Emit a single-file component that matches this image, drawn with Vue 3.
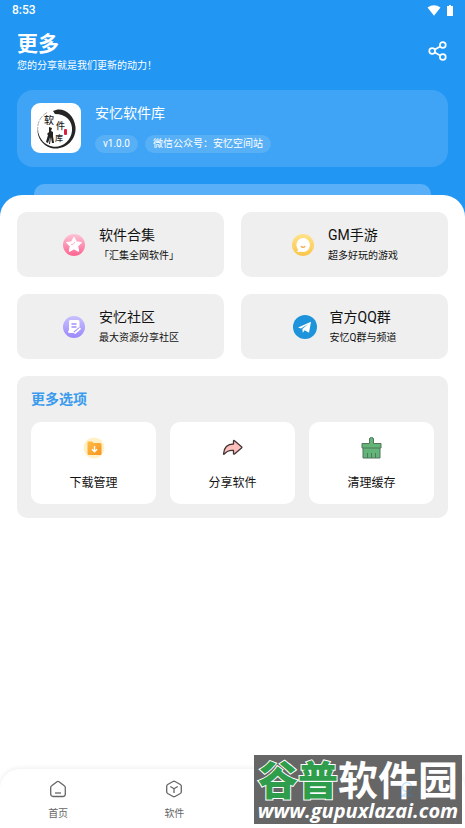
<template>
  <div class="page">
    <header class="hero">
      <div class="status-bar">
        <span>8:53</span>
        <div class="status-icons">
          <svg width="14" height="11" viewBox="0 0 14 11"><path d="M0.5 2.5 Q7 -2 13.5 2.5 L7 10.8 Z" fill="#fff" /></svg>
          <svg width="6" height="11" viewBox="0 0 6 11"><path d="M2 0h2v1h2v10H0V1h2z" fill="#fff" /></svg>
        </div>
      </div>

      <div class="title-row">
        <div>
          <h1>更多</h1>
          <p>您的分享就是我们更新的动力！</p>
        </div>
        <button class="share" aria-label="分享">
          <svg width="20" height="20" viewBox="0 0 20 20" fill="none" stroke="#fff" stroke-width="1.7">
            <circle cx="4.2" cy="10" r="2.9" />
            <circle cx="14.8" cy="4" r="2.9" />
            <circle cx="14.8" cy="16" r="2.9" />
            <path d="M6.8 8.6 12.2 5.5M6.8 11.4l5.4 3.1" />
          </svg>
        </button>
      </div>

      <section class="app-card">
        <svg class="app-logo" width="50" height="50" viewBox="0 0 50 50">
          <rect width="50" height="50" rx="9" fill="#fff" />
          <path d="M22 8C31 3 43 10 44.5 24 45.5 38 33 48 20 45 11 42 6 34 6.500 26c1.500 10 7 16 15 17.500C31 45 40 38 41 28 42 18 35 11 24 11z" fill="#252525" />
          <path d="M7 29C5.500 21 9 13 17 9" fill="none" stroke="#aaa" stroke-width="1" stroke-dasharray="5 1" />
          <text x="13" y="21" font-size="10" class="ink">软</text>
          <text x="25" y="26" font-size="9" class="ink">件</text>
          <text x="24" y="38" font-size="8" class="ink">库</text>
          <path d="M18 24l3 1-1 3 2 1v4l1 7h-2l-1-6-1 7h-1l1-7-2 6-2-1 2-7-1-1 2-2z" fill="#222" />
          <rect x="33" y="26" width="3" height="6" rx="1" fill="#d9203c" />
        </svg>
        <div>
          <h2>安忆软件库</h2>
          <div class="chips">
            <span>v1.0.0</span>
            <span>微信公众号：安忆空间站</span>
          </div>
        </div>
      </section>
      <div class="peek"></div>
    </header>

    <main class="sheet">
      <div class="links">
        <button v-for="item in links" :key="item.icon" class="link-card">
          <svg v-if="item.icon === 'star'" width="24" height="24" viewBox="0 0 24 24">
            <defs>
              <linearGradient id="pink" x2="0" y2="1"><stop stop-color="#ffc3d7" /><stop offset="1" stop-color="#fb6390" /></linearGradient>
            </defs>
            <circle cx="12" cy="12" r="11" fill="url(#pink)" />
            <path d="m12 4.500 2.200 4.400 5 .7-3.600 3.500.9 5-4.500-2.400-4.500 2.400.9-5-3.600-3.500 5-.7z" fill="#fff" stroke="#fff" stroke-width="1.300" stroke-linejoin="round" />
            <path d="M9 11.500q2.500.5 4-2.500" fill="none" stroke="#ffb2ca" />
          </svg>
          <svg v-else-if="item.icon === 'chat'" width="24" height="24" viewBox="0 0 24 24">
            <defs>
              <linearGradient id="gold" x2="0" y2="1"><stop stop-color="#ffe28a" /><stop offset="1" stop-color="#fbc54b" /></linearGradient>
            </defs>
            <circle cx="12" cy="12" r="11" fill="url(#gold)" />
            <path d="M12 5a7 7 0 1 1-2 13.700l-4 .3 1.300-2.300A7 7 0 0 1 12 5z" fill="#fff" />
            <path d="M10.200 13.500q1.800 1.800 3.600 0" fill="none" stroke="#f5a348" stroke-width="1.200" stroke-linecap="round" />
          </svg>
          <svg v-else-if="item.icon === 'note'" width="24" height="24" viewBox="0 0 24 24">
            <defs>
              <linearGradient id="violet" x2="0" y2="1"><stop stop-color="#c9c1ff" /><stop offset="1" stop-color="#9a89fa" /></linearGradient>
            </defs>
            <circle cx="12" cy="12" r="11" fill="url(#violet)" />
            <path d="M8.500 5h7.500q1.500 0 1.500 1.500v6L12 18H7.500Q6 18 6 16.500 7 16 7 14V6.500Q7 5 8.500 5z" fill="#fff" />
            <path d="M9.500 9h5M9.500 12h5" stroke="#9f90fb" stroke-width="1.300" />
            <path d="m12.500 18 5.500-4.500" stroke="#9f90fb" stroke-width="3.500" />
            <path d="m13 18 5-4.200" stroke="#fff" stroke-width="1.800" stroke-linecap="round" />
          </svg>
          <svg v-else width="24" height="24" viewBox="0 0 24 24">
            <circle cx="12" cy="12" r="12" fill="#1c93da" />
            <path d="m5 12.500 13-5.700-2 11-4.300-2.500-1.900 2.400-.5-3.800L15 9.200l-7 4.300z" fill="#fff" />
          </svg>
          <span class="link-text">
            <strong>{{ item.title }}</strong>
            <small>{{ item.note }}</small>
          </span>
        </button>
      </div>

      <section class="options">
        <h3>更多选项</h3>
        <div class="tiles">
          <button class="tile">
            <svg width="24" height="24" viewBox="0 0 24 24">
              <defs>
                <linearGradient id="folder" x2="1" y2="1"><stop stop-color="#ffbd48" /><stop offset="1" stop-color="#f7941d" /></linearGradient>
              </defs>
              <circle cx="12" cy="12" r="10.500" fill="#fff0c8" />
              <path d="M6 5.500h4l1.500 1.500H18q1.500 0 1.500 1.500v9Q19.500 19 18 19H7q-1.500 0-1.500-1.500V6z" fill="url(#folder)" />
              <path d="M12.500 10v5.500M10 13.300l2.500 2.500 2.500-2.500" fill="none" stroke="#fff" stroke-width="1.400" />
            </svg>
            <span>下载管理</span>
          </button>
          <button class="tile">
            <svg width="24" height="24" viewBox="0 0 24 24">
              <path d="M2.500 18C3 11.500 7 8 12.500 8V5q0-1 1-.3l7 6q.8.700 0 1.400l-7 5.900q-1 .5-1-.5v-3C8 14 5.500 15.500 3.300 18q-.6.500-.8 0z" fill="#ffbfba" stroke="#423536" stroke-width="1.300" stroke-linejoin="round" />
            </svg>
            <span>分享软件</span>
          </button>
          <button class="tile">
            <svg width="24" height="24" viewBox="0 0 24 24">
              <path d="M9.500 7.500V3q0-1.500 2-1.500t2 1.500v4.500H21V12h-1v10H3V12H2V7.500z" fill="#61b578" stroke="#55735d" stroke-linejoin="round" />
              <path d="M3 12h17M7.500 17v5M11.500 17v5M15.500 17v5" fill="none" stroke="#55735d" />
            </svg>
            <span>清理缓存</span>
          </button>
        </div>
      </section>
    </main>

    <nav class="tab-bar">
      <button>
        <svg width="18" height="18" viewBox="0 0 18 18" fill="none" stroke="#666" stroke-width="1.300" stroke-linejoin="round">
          <path d="M8 1.800q1-.7 2 0l5.300 4q1 .7 1 2V14q0 2.500-2.500 2.500H4.200Q1.700 16.500 1.700 14V7.800q0-1.300 1-2z" />
          <path d="M6 13h6" />
        </svg>
        <span>首页</span>
      </button>
      <button>
        <svg width="18" height="18" viewBox="0 0 18 18" fill="none" stroke="#666" stroke-width="1.300" stroke-linejoin="round">
          <path d="M8 1.500q1-.5 2 0l5.300 3q1 .6 1 1.800v5.400q0 1.200-1 1.800l-5.300 3q-1 .5-2 0l-5.300-3q-1-.6-1-1.800V6.300q0-1.200 1-1.800z" />
          <path d="M5.300 6.500 9 8.800l3.700-2.300M9 8.800V13" />
        </svg>
        <span>软件</span>
      </button>
    </nav>

    <div class="site-mark">
      <div class="site-name"><b>谷普</b>软件园</div>
      <div class="site-url">www.gupuxlazai.com</div>
      <svg class="mark-tint" width="18" height="18" viewBox="0 0 18 18" fill="none" stroke="#2196f3" stroke-width="1.300">
        <circle cx="9" cy="6" r="4.500" />
        <path d="M4 15q5-5 10 0z" />
      </svg>
    </div>
  </div>
</template>

<script setup>
const links = [
  { icon: 'star', title: '软件合集', note: '「汇集全网软件」' },
  { icon: 'chat', title: 'GM手游', note: '超多好玩的游戏' },
  { icon: 'note', title: '安忆社区', note: '最大资源分享社区' },
  { icon: 'plane', title: '官方QQ群', note: '安忆Q群与频道' }
];
</script>

<style>
body {
  margin: 0;
}
</style>

<style scoped>
.page {
  position: relative;
  display: flex;
  flex-direction: column;
  min-height: 100vh;
  background: #fff;
  font-family: Roboto, "Noto Sans CJK SC", sans-serif;
  color: #111;
}

h1,
h2,
h3,
p {
  margin: 0;
}

button {
  border: 0;
  padding: 0;
  background: none;
  font: inherit;
  color: inherit;
}

svg {
  display: block;
  flex-shrink: 0;
}

.hero {
  padding: 0 17px;
  background: #2196f3;
  color: #fff;
}

.status-bar {
  display: flex;
  align-items: center;
  justify-content: space-between;
  height: 20px;
  margin: 0 -5px;
  font-size: 12px;
  font-weight: 500;
}

.status-icons {
  display: flex;
  gap: 6px;
}

.title-row {
  display: flex;
  align-items: center;
  justify-content: space-between;
  padding: 12px 0 16px;
}

.share {
  padding-bottom: 4px;
}

h1 {
  font-size: 21px;
  line-height: 25px;
}

.title-row p {
  font-size: 10px;
  line-height: 17px;
}

.app-card {
  display: flex;
  align-items: center;
  gap: 14px;
  padding: 13px 14px 14px;
  border-radius: 16px;
  background: #3fa4f5;
}

.ink {
  font-family: "Noto Sans CJK SC", sans-serif;
  font-weight: 500;
  fill: #222;
}

h2 {
  font-size: 14px;
  font-weight: 400;
  line-height: 20px;
}

.chips {
  display: flex;
  gap: 7px;
  margin-top: 12px;
}

.chips span {
  padding: 0 8px;
  border-radius: 9px;
  background: #57aff6;
  font-size: 10px;
  line-height: 18px;
}

/* низ шапки уходит под скругление листа */
.peek {
  height: 33px;
  margin: 17px 17px 0;
  border-radius: 10px 10px 0 0;
  background: #59aff8;
}

.sheet {
  flex: 1;
  margin-top: -22px;
  padding: 17px;
  border-radius: 22px 22px 0 0;
  background: #fff;
}

.links {
  display: grid;
  grid-template-columns: 1fr 1fr;
  gap: 17px;
}

.link-card {
  display: flex;
  align-items: center;
  justify-content: center;
  gap: 13px;
  height: 65px;
  border-radius: 10px;
  background: #efefef;
  text-align: left;
}

.link-text strong,
.link-text small {
  display: block;
}

.link-text strong {
  font-size: 14px;
  font-weight: 400;
  line-height: 21px;
}

.link-text small {
  font-size: 10px;
  line-height: 19px;
}

.options {
  margin-top: 17px;
  padding: 14px;
  border-radius: 10px;
  background: #efefef;
}

h3 {
  font-size: 14px;
  line-height: 18px;
  color: #3a9bee;
}

.tiles {
  display: grid;
  grid-template-columns: repeat(3, 1fr);
  gap: 14px;
  margin-top: 14px;
}

.tile {
  display: flex;
  flex-direction: column;
  align-items: center;
  gap: 14px;
  padding: 14px 0 12px;
  border-radius: 10px;
  background: #fff;
  font-size: 12px;
  line-height: 18px;
}

.tab-bar {
  display: grid;
  grid-template-columns: repeat(4, 1fr);
  height: 59px;
  border-radius: 20px 20px 0 0;
  background: #fff;
  box-shadow: 0 -1px 5px rgba(0, 0, 0, 0.07);
}

.tab-bar button {
  display: flex;
  flex-direction: column;
  align-items: center;
  gap: 9px;
  padding-top: 11px;
  font-size: 10px;
  line-height: 14px;
  color: #666;
}

/* Плашка сайта поверх нижней панели */
.site-mark {
  position: absolute;
  right: 3px;
  bottom: 4px;
  width: 208px;
  height: 69px;
  background: #666;
  color: #fff;
  white-space: nowrap;
  text-align: center;
}

.site-name {
  font-family: "Noto Sans CJK SC", sans-serif;
  font-size: 40px;
  font-weight: 700;
  line-height: 46px;
}

.site-name b {
  color: #2f9e4c;
  -webkit-text-stroke: 2px #fff;
  paint-order: stroke fill;
}

.site-url {
  font-family: "Open Sans", sans-serif;
  font-size: 20px;
  font-weight: 700;
  font-style: italic;
  line-height: 20px;
}

.mark-tint {
  position: absolute;
  right: 46px;
  top: 26px;
  opacity: 0.25;
}
</style>
